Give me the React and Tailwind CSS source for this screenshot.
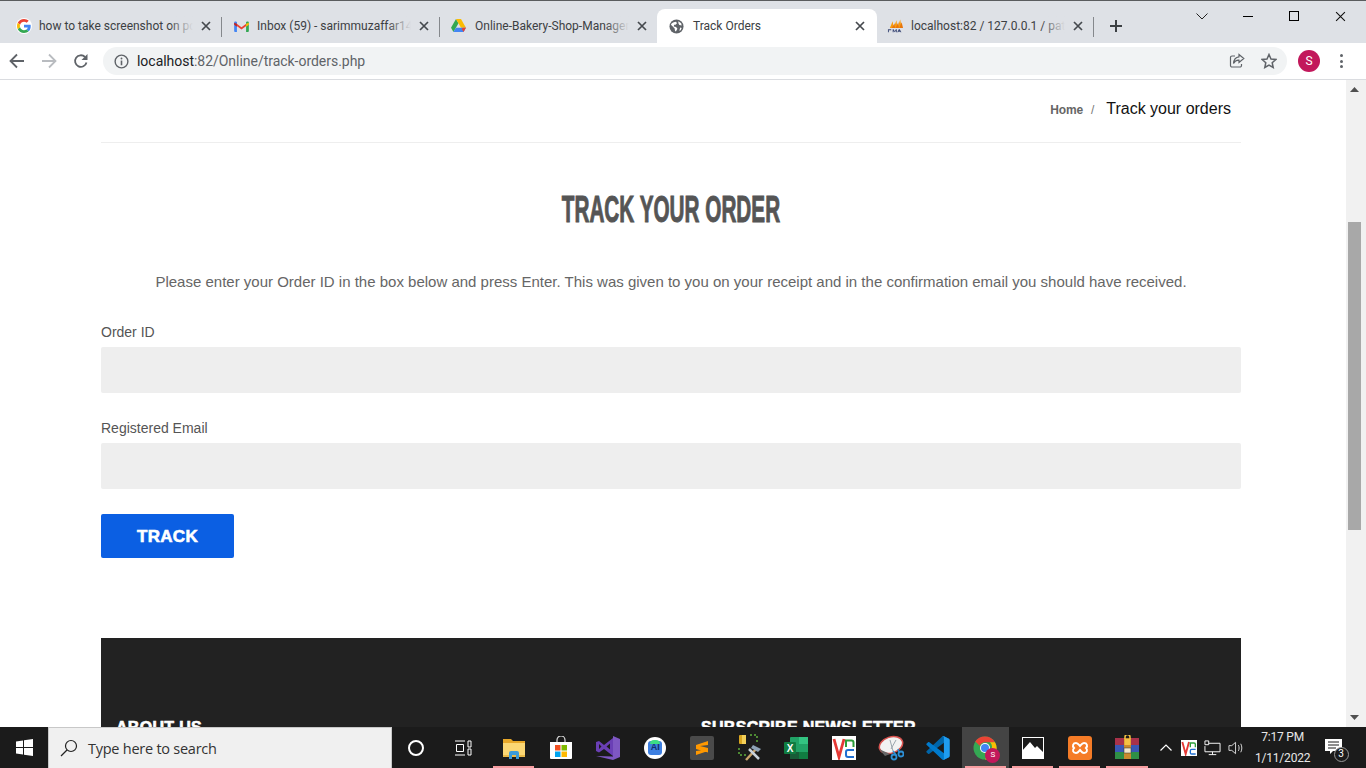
import React from "react";

const ui = "font-['Roboto','Noto_Sans',sans-serif]";

const GoogleIcon = () => (
  <span className="w-4 h-4 rounded-full bg-white flex items-center justify-center">
    <svg width="14" height="14" viewBox="0 0 48 48">
      <path fill="#EA4335" d="M24 9.5c3.5 0 6.7 1.2 9.2 3.6l6.9-6.9C35.9 2.4 30.5 0 24 0 14.6 0 6.5 5.4 2.6 13.2l8 6.2C12.5 13.7 17.800 9.500 24 9.500z" />
      <path fill="#4285F4" d="M47 24.500c0-1.600-.1-3.100-.4-4.500H24v9h12.900c-.6 3-2.200 5.500-4.700 7.200l7.700 6c4.500-4.200 7.100-10.300 7.100-17.700z" />
      <path fill="#FBBC05" d="M10.600 28.600c-.5-1.400-.8-3-.8-4.600s.3-3.200.8-4.600l-8-6.200C.9 16.500 0 20.100 0 24s.9 7.500 2.600 10.800l8-6.200z" />
      <path fill="#34A853" d="M24 48c6.500 0 11.900-2.100 15.900-5.800l-7.700-6c-2.100 1.400-4.900 2.300-8.200 2.300-6.200 0-11.500-4.200-13.400-9.900l-8 6.200C6.500 42.600 14.600 48 24 48z" />
    </svg>
  </span>
);

const GmailIcon = () => (
  <svg width="15" height="11" viewBox="0 0 16 12">
    <path fill="#EA4335" d="M1 1.500 8 6.800l7-5.300V4L8 9.200 1 4z" />
    <path fill="#4285F4" d="M0 2c0-1.500 1.300-2 2.500-1.200L3 1.200V12H1a1 1 0 0 1-1-1z" />
    <path fill="#34A853" d="M16 2c0-1.500-1.300-2-2.500-1.200l-.5.4V12h2a1 1 0 0 0 1-1z" />
    <path fill="#C5221F" d="M0 2v2l3 2.200V3z" />
    <path fill="#FBBC04" d="M16 2v2l-3 2.200V3z" />
  </svg>
);

const DriveIcon = () => (
  <svg width="15" height="14" viewBox="0 0 16 15" className="-ml-px">
    <path fill="#34A853" d="M5.300 0 0 9.300l2.600 4.500L8 4.600z" />
    <path fill="#FBBC04" d="M5.300 0h5.400L16 9.300h-5.300z" />
    <path fill="#4285F4" d="M5.200 9.300 2.600 13.800h10.800L16 9.300z" />
    <path fill="#EA4335" d="M16 9.300 13.400 13.800 11.500 10.800 12.500 9.300z" />
  </svg>
);

const GlobeIcon = () => (
  <svg width="15" height="15" viewBox="0 0 16 16" className="-ml-px">
    <circle cx="8" cy="8" r="7.500" fill="#5f6368" />
    <path fill="#fff" d="M3 4.500 5 3.500 7.500 3 8.500 4.500 7 6 5.500 6 5 8 7.500 8.500 9 10.500 7.500 13 6.500 13 6 10 3.500 7.500 2 6zM10 2.500 13 4.500 13.500 7 11 6.500 10 4.500zM12 9 13.500 9.500 12.500 12 11 12.500z" />
  </svg>
);

const PmaIcon = () => (
  <svg width="17" height="16" viewBox="0 0 18 16">
    <path fill="#F89C0E" d="M3 10 6 3l1 7zM7 10l3-8 1 8zM11 10l3-9 1.500 9z" />
    <path fill="#E8760B" d="M5 10 8 5l.5 5zM9 10l3-6 .5 6zM13 10l2.500-6 1.500 6z" />
    <path fill="#3d4a78" d="M1 11.500h3.500v.9H2v2.300H1zM6 11.500h1l1.200 2 1.200-2h1v3.200h-1v-1.700l-1.200 1.700L7 13v1.700H6zM12.500 11.500h1l1.800 3.200h-1l-.3-.6h-1.800l-.4.6h-1z" />
  </svg>
);

const CloseX = ({ size = 10, w = 1.700, color = "#45494e" }) => (
  <svg width={size} height={size} viewBox="0 0 10 10">
    <path d="M1 1l8 8M9 1l-8 8" stroke={color} strokeWidth={w} fill="none" />
  </svg>
);

const tabs = [
  { icon: <GoogleIcon />, text: "how to take screenshot on pc - Google Search", sep: true },
  { icon: <GmailIcon />, text: "Inbox (59) - sarimmuzaffar14@gmail.com", sep: true },
  { icon: <DriveIcon />, text: "Online-Bakery-Shop-Management", sep: false },
];

function Tab({ icon, text, sep }) {
  return (
    <div className="relative w-[218px] h-[34px] flex items-center pl-[8px] shrink-0">
      <span className="w-[23px] shrink-0 flex items-center">{icon}</span>
      <span className="relative w-[154px] overflow-hidden whitespace-nowrap text-[12px] text-[#3c4043] leading-none py-1">
        {text}
        <span className="absolute right-0 top-0 bottom-0 w-[24px] bg-gradient-to-r from-transparent to-[#dee1e6]" />
      </span>
      <span className="ml-[8px] shrink-0 flex"><CloseX /></span>
      {sep && <span className="absolute right-[4px] top-[8px] w-px h-[20px] bg-[#85888c]" />}
    </div>
  );
}

function TabBar() {
  return (
    <div className={`h-[43px] bg-[#dee1e6] border-t border-[#5a5c5e] flex shrink-0 ${ui}`}>
      <div className="flex items-end pl-[8px] w-[1190px] shrink-0">
        {tabs.map((t) => <Tab key={t.text} {...t} />)}
        <div className="relative -ml-[5px] w-[220px] h-[34px] bg-white rounded-t-[8px] flex items-center pl-[13px] shrink-0">
          <span className="w-[23px] flex"><GlobeIcon /></span>
          <span className="w-[162px] text-[12px] text-[#3c4043] whitespace-nowrap leading-none">Track Orders</span>
          <CloseX />
        </div>
        <div className="relative w-[218px] h-[34px] flex items-center pl-[10px] shrink-0">
          <span className="w-[24px] shrink-0 flex"><PmaIcon /></span>
          <span className="relative w-[154px] overflow-hidden whitespace-nowrap text-[12px] text-[#3c4043] leading-none py-1">
            localhost:82 / 127.0.0.1 / patches / phpMyAdmin
            <span className="absolute right-0 top-0 bottom-0 w-[24px] bg-gradient-to-r from-transparent to-[#dee1e6]" />
          </span>
          <span className="ml-[8px] shrink-0 flex"><CloseX /></span>
          <span className="absolute right-[1px] top-[8px] w-px h-[20px] bg-[#85888c]" />
        </div>
        <div className="h-[34px] flex items-center ml-[14px]">
          <svg width="14" height="14" viewBox="0 0 14 14"><path d="M7 1v12M1 7h12" stroke="#3c4043" strokeWidth="2" /></svg>
        </div>
      </div>
      <div className="flex-1 relative flex h-[30px] pl-[1px]">
        <div className="w-[22px] flex items-center justify-center">
          <svg width="12" height="7" viewBox="0 0 12 7"><path d="M.5.5 6 6l5.500-5.500" stroke="#222" fill="none" /></svg>
        </div>
        <div className="w-[46px] ml-[12px] flex items-center justify-center">
          <span className="w-[10px] h-px bg-black" />
        </div>
        <div className="w-[46px] flex items-center justify-center">
          <span className="w-[10px] h-[10px] border border-black" />
        </div>
        <div className="w-[46px] flex items-center justify-center">
          <CloseX size={11} w={1} color="#111" />
        </div>
      </div>
    </div>
  );
}

function Toolbar() {
  return (
    <div className="h-[37px] bg-white border-b border-[#dadce0] flex items-center shrink-0">
      <div className="w-[103px] flex items-center pl-[9px] gap-[16px] shrink-0">
        <svg width="16" height="16" viewBox="0 0 16 16"><path d="M15 8H2M8 1.500 1.500 8 8 14.500" stroke="#5f6368" strokeWidth="1.800" fill="none" /></svg>
        <svg width="16" height="16" viewBox="0 0 16 16"><path d="M1 8h13M8 1.500 14.500 8 8 14.500" stroke="#b9bcc0" strokeWidth="1.800" fill="none" /></svg>
        <svg width="16" height="16" viewBox="0 0 16 16"><path d="M13.500 9.500A5.800 5.800 0 1 1 12 4" stroke="#5f6368" strokeWidth="1.800" fill="none" /><path d="M14.500 1v6h-6z" fill="#5f6368" /></svg>
      </div>
      <div className="w-[1184px] h-[28px] bg-[#f1f3f4] rounded-full flex items-center pl-[11px] pr-[10px] shrink-0">
        <svg width="15" height="15" viewBox="0 0 16 16"><circle cx="8" cy="8" r="6.800" stroke="#5f6368" strokeWidth="1.500" fill="none" /><path d="M8 7v5" stroke="#5f6368" strokeWidth="1.700" /><circle cx="8" cy="4.800" r="1" fill="#5f6368" /></svg>
        <span className="ml-[8px] text-[14px] leading-none whitespace-nowrap font-['Roboto',sans-serif] text-[#5f6368] tracking-[-0.03px]">
          <span className="text-[#202124]">localhost</span>:82/Online/track-orders.php
        </span>
        <span className="ml-auto mr-[16px] flex">
          <svg width="16" height="16" viewBox="0 0 16 16"><path d="M6 3H3a1.500 1.500 0 0 0-1.500 1.500v8A1.500 1.500 0 0 0 3 14h8a1.500 1.500 0 0 0 1.500-1.500V11" stroke="#5f6368" strokeWidth="1.200" fill="none" /><path d="M10 1.500 14.800 5.500 10 9.500V7.200C7.500 7 5.800 8 4.500 10.500 4.800 7 6.500 4.200 10 3.800z" stroke="#5f6368" strokeWidth="1.200" fill="none" /></svg>
        </span>
        <svg width="16" height="16" viewBox="0 0 16 16"><path d="M8 1.500 10 6l4.800.5-3.600 3.200 1 4.800L8 12l-4.200 2.500 1-4.800L1.200 6.500 6 6z" stroke="#5f6368" strokeWidth="1.500" fill="none" /></svg>
      </div>
      <span className="ml-[11px] w-[22px] h-[22px] rounded-full bg-[#c2185b] text-white text-[12px] flex items-center justify-center font-['Roboto',sans-serif] shrink-0">S</span>
      <span className="ml-[20px] flex flex-col gap-[2.500px]">
        <span className="w-[3px] h-[3px] rounded-full bg-[#5f6368]" />
        <span className="w-[3px] h-[3px] rounded-full bg-[#5f6368]" />
        <span className="w-[3px] h-[3px] rounded-full bg-[#5f6368]" />
      </span>
    </div>
  );
}

function Field({ label, top }) {
  return (
    <div className={top}>
      <label className="block text-[14px] leading-[20px] text-[#555]">{label}</label>
      <div className="mt-[5px] h-[46px] bg-[#eeeeee] rounded-[2px]" />
    </div>
  );
}

function Page() {
  return (
    <div className="w-[1346px] overflow-hidden bg-white font-['Liberation_Sans',Arial,sans-serif] shrink-0">
      <div className="ml-[101px] w-[1140px]">
        <div className="h-[63px] border-b border-[#eeeeee] flex justify-end items-start pt-[19px] pr-[10px]">
          <span className="text-[12px] font-bold text-[#666] mt-[4px] leading-[14px] tracking-[-0.2px]">Home</span>
          <span className="text-[12px] text-[#777] mt-[4px] ml-[8px] mr-[12px] leading-[14px]">/</span>
          <span className="text-[16px] text-[#111] leading-[20px]">Track your orders</span>
        </div>
        <div className="mt-[47px] flex justify-center">
          <h1 className="text-center text-[37px] leading-[40px] font-bold text-[#555] whitespace-nowrap scale-x-[0.56] [-webkit-text-stroke:1px_#555]">TRACK YOUR ORDER</h1>
        </div>
        <p className="mt-[42px] text-center text-[15px] leading-[20px] text-[#666] whitespace-nowrap">
          Please enter your Order ID in the box below and press Enter. This was given to you on your receipt and in the confirmation email you should have received.
        </p>
        <Field label="Order ID" top="mt-[30px]" />
        <Field label="Registered Email" top="mt-[25px]" />
        <button className="mt-[25px] w-[133px] h-[44px] pt-[1px] bg-[#0b5fe3] rounded-[2px] text-white text-[17px] font-bold [-webkit-text-stroke:0.6px_white] tracking-[0.3px] flex items-center justify-center">TRACK</button>
        <div className="mt-[80px] h-[200px] bg-[#222222] flex pt-[80px] pl-[15px] text-white text-[16px] font-bold [-webkit-text-stroke:0.6px_white] leading-[20px] tracking-[0.3px]">
          <div className="w-[585px]">ABOUT US</div>
          <div>SUBSCRIBE NEWSLETTER</div>
        </div>
      </div>
    </div>
  );
}

function Scrollbar() {
  return (
    <div className="flex-1 bg-[#f1f1f1] flex flex-col items-start pl-[2px]">
      <svg className="mt-[7px] ml-[2px] shrink-0" width="9" height="5" viewBox="0 0 9 5"><path d="M4.500 0 9 5H0z" fill="#505050" /></svg>
      <div className="mt-[130px] w-[13px] h-[308px] bg-[#a8a8a8] shrink-0" />
      <svg className="mt-auto mb-[7px] ml-[2px] shrink-0" width="9" height="5" viewBox="0 0 9 5"><path d="M4.500 5 9 0H0z" fill="#505050" /></svg>
    </div>
  );
}

const Store = () => (
  <svg width="24" height="24" viewBox="0 0 24 24">
    <path d="M8 7V4a4 4 0 0 1 8 0v3" stroke="#ddd" fill="none" strokeWidth="1.200" />
    <path fill="#fff" d="M1 6h22v16a1 1 0 0 1-1 1H2a1 1 0 0 1-1-1z" />
    <rect x="6" y="9" width="5.500" height="5.500" fill="#f25022" />
    <rect x="12.500" y="9" width="5.500" height="5.500" fill="#7fba00" />
    <rect x="6" y="15.500" width="5.500" height="5.500" fill="#00a4ef" />
    <rect x="12.500" y="15.500" width="5.500" height="5.500" fill="#ffb900" />
  </svg>
);

const Explorer = () => (
  <svg width="24" height="24" viewBox="0 0 24 24">
    <path fill="#e8a829" d="M1 3h8l2 2h12v3H1z" />
    <path fill="#fbd774" d="M1 7h22v14H1z" />
    <path fill="#e9b949" d="M1 19h22v2H1z" />
    <path fill="#3d9bd9" d="M7 23v-6a2 2 0 0 1 2-2h6a2 2 0 0 1 2 2v6h-3v-4h-4v4z" />
  </svg>
);

const VS = () => (
  <svg width="24" height="26" viewBox="0 0 24 26">
    <path fill="#7e57c2" d="M17 1 24 4v18l-7 3-17-4 17 .5z" />
    <path fill="#6a3fb5" fillRule="evenodd" d="M0 7l3-1 5 4L17 3v18l-9-7-5 3.500L0 16zM3 9v5l2.500-2.500zM10.500 11.500 14 14.500v-6z" />
  </svg>
);

const Studio = () => (
  <span className="w-[22px] h-[22px] rounded-full bg-white flex items-center justify-center relative">
    <span className="w-[14px] h-[14px] rounded-[3px] bg-[#3d7fe0] text-[#12306b] text-[9px] font-bold flex items-center justify-center font-['Liberation_Sans',sans-serif]">AI</span>
    <span className="absolute top-[3px] w-[10px] h-[4px] rounded-t-full bg-[#3ddc84]" />
  </span>
);

const Sublime = () => (
  <span className="w-[24px] h-[24px] bg-[#4a4a4a] rounded-[2px] flex items-center justify-center">
    <svg width="14" height="16" viewBox="0 0 14 16"><path fill="#ff9800" d="M13 1 1 5v4l12 3.500V8L5 6l8-1zM1 11v4l12-4-4-1.200z" /></svg>
  </span>
);

const Tools = () => (
  <svg width="26" height="30" viewBox="0 0 26 30">
    <rect x="2" y="2" width="7" height="9" rx="1" fill="#d9a520" />
    <rect x="5" y="2" width="4" height="9" fill="#f4cf58" />
    <path d="M13 2h7v7M2 15v7h7" stroke="#5fae3d" strokeDasharray="2 2" strokeWidth="1.500" fill="none" />
    <path d="M9 27 20 15" stroke="#c8a26a" strokeWidth="2.500" />
    <path d="M12 16l10 10" stroke="#c9d2dc" strokeWidth="2.500" />
    <path d="M16 12l8 4-3 3-7-4z" fill="#8da2b6" />
  </svg>
);

const Excel = () => (
  <svg width="25" height="24" viewBox="0 0 25 24">
    <rect x="6" y="1" width="18" height="22" rx="1" fill="#21a366" />
    <rect x="15" y="1" width="9" height="7" fill="#33c481" />
    <rect x="15" y="16" width="9" height="7" fill="#107c41" />
    <rect x="6" y="16" width="9" height="7" fill="#185c37" />
    <rect x="0" y="6" width="12" height="12" rx="1" fill="#107c41" />
    <text x="6" y="15.500" textAnchor="middle" fontSize="10" fontWeight="700" fill="#fff" fontFamily="Liberation Sans">X</text>
  </svg>
);

const Vnc = ({ size = 24 }) => (
  <svg width={size} height={size} viewBox="0 0 24 24">
    <rect width="24" height="24" fill="#fff" />
    <path d="M2 3l5 18 5-18" stroke="#e53935" strokeWidth="2.800" fill="none" />
    <path d="M14 11V4.500h5.500a2 2 0 0 1 2 2V11" stroke="#2e9e3a" strokeWidth="2" fill="none" />
    <path d="M22 14h-6a2 2 0 0 0-2 2v3a2 2 0 0 0 2 2h6" stroke="#1f6fd1" strokeWidth="2" fill="none" />
  </svg>
);

const Snip = () => (
  <svg width="26" height="26" viewBox="0 0 26 26">
    <ellipse cx="13" cy="10" rx="12" ry="8" transform="rotate(-18 13 10)" fill="#f2f2f2" stroke="#d9534f" strokeWidth="1.500" />
    <path d="M1 14l6 7 5-2" fill="#666" />
    <path d="M12 5l3 11M18 5 13 14" stroke="#9aa5ad" />
    <circle cx="16" cy="22" r="2.500" stroke="#2d8fd5" strokeWidth="1.800" fill="none" />
    <circle cx="23" cy="19" r="2.500" stroke="#2d8fd5" strokeWidth="1.800" fill="none" />
    <path d="M15 16l3 4M20 14l1 3" stroke="#2d8fd5" strokeWidth="1.500" />
  </svg>
);

const VSCode = () => (
  <svg width="24" height="24" viewBox="0 0 100 100">
    <path fill="#0065a9" d="M96 11 75 1c-2.500-1-5.500-.5-7.500 1.500L3 62c-2 1.800-2 4.800 0 6.600l5.500 5c1.500 1.400 3.800 1.500 5.400.3L97 11z" />
    <path fill="#007acc" d="M96 89 75 99c-2.500 1-5.500.5-7.500-1.500L3 38c-2-1.800-2-4.800 0-6.600l5.500-5c1.500-1.400 3.800-1.500 5.400-.3L97 89z" />
    <path fill="#1f9cf0" d="M75 99c-2.500 1.200-5.500.7-7.500-1.300 2.500 2.500 7 .8 7-2.800V5c0-3.600-4.500-5.300-7-2.800C69.500.2 72.500-.3 75 1l20 10c2.500 1 4 3.300 4 6v66c0 2.700-1.500 5-4 6z" />
  </svg>
);

const Chrome = () => (
  <span className="relative w-[24px] h-[24px] block">
    <svg width="24" height="24" viewBox="0 0 48 48">
      <circle cx="24" cy="24" r="23" fill="#34a853" />
      <path fill="#ea4335" d="M24 1a23 23 0 0 1 20 11.500H24a11.500 11.500 0 0 0-10.500 7L4.500 11A23 23 0 0 1 24 1z" />
      <path fill="#fbbc04" d="M44 12.500A23 23 0 0 1 24 47l10-17a11.500 11.500 0 0 0 0-17.500z" />
      <circle cx="24" cy="24" r="10" fill="#fff" />
      <circle cx="24" cy="24" r="8" fill="#4285f4" />
    </svg>
    <span className="absolute -right-[3px] -bottom-[3px] w-[15px] h-[15px] rounded-full bg-[#c2185b] text-white text-[8px] leading-none flex items-center justify-center font-['Roboto',sans-serif]">S</span>
  </span>
);

const Photos = () => (
  <svg width="22" height="22" viewBox="0 0 22 22">
    <rect x=".5" y=".5" width="21" height="21" fill="#1b1b1b" stroke="#fff" />
    <path fill="#fff" d="M0 22V14L8 5l5 6 2-2 7 7v6z" />
  </svg>
);

const Xampp = () => (
  <span className="w-[24px] h-[24px] bg-[#f57c27] rounded-[3px] flex items-center justify-center">
    <svg width="18" height="16" viewBox="0 0 18 16">
      <path d="M5 3c-3 0-4 3-2 5-2 2-1 5 2 5 2 0 3-2 4-3 1 1 2 3 4 3 3 0 4-3 2-5 2-2 1-5-2-5-2 0-3 2-4 3-1-1-2-3-4-3z" stroke="#fff" strokeWidth="2" fill="none" />
    </svg>
  </span>
);

const WinRar = () => (
  <svg width="24" height="26" viewBox="0 0 24 26">
    <rect x="0" y="3" width="24" height="7" fill="#a8324a" />
    <rect x="0" y="10" width="24" height="7" fill="#3a57b5" />
    <rect x="0" y="17" width="24" height="7" fill="#2f8f46" />
    <rect x="9" y="3" width="7" height="21" fill="#c98a2e" />
    <rect x="9" y="13" width="7" height="5" fill="#f1e6c8" stroke="#333" strokeWidth=".5" />
    <path d="M10 4V2a2.500 2.500 0 0 1 5 0v2" stroke="#f5c242" fill="none" strokeWidth="1.500" />
    <rect x="9.500" y="4" width="6" height="6" fill="#f5c242" />
  </svg>
);

const apps = [
  { el: <Explorer />, on: true },
  { el: <Store /> },
  { el: <VS /> },
  { el: <Studio /> },
  { el: <Sublime /> },
  { el: <Tools /> },
  { el: <Excel /> },
  { el: <Vnc /> },
  { el: <Snip /> },
  { el: <VSCode /> },
  { el: <Chrome />, on: true, active: true },
  { el: <Photos />, on: true },
  { el: <Xampp />, on: true },
  { el: <WinRar />, on: true },
];

function Taskbar() {
  return (
    <div className={`h-[41px] bg-[#1b1b1b] flex shrink-0 items-stretch text-white ${ui}`}>
      <div className="w-[48px] flex items-center justify-center shrink-0">
        <svg width="17" height="17" viewBox="0 0 17 17" fill="#fff">
          <path d="M0 2.400 7 1.400v6.600H0zM8 1.200 17 0v8H8zM0 9h7v6.600L0 14.600zM8 9h9v8l-9-1.200z" />
        </svg>
      </div>
      <div className="w-[344px] bg-[#f0f0f0] border border-[#c8c8c8] border-b-0 flex items-center pl-[11px] shrink-0">
        <svg width="18" height="18" viewBox="0 0 18 18"><circle cx="11" cy="7" r="5.500" stroke="#222" strokeWidth="1.200" fill="none" /><path d="M7 11l-6 6" stroke="#222" strokeWidth="1.300" /></svg>
        <span className="ml-[10px] pt-[1px] text-[14.500px] text-[#333] font-['Open_Sans',sans-serif] tracking-[-0.25px] whitespace-nowrap">Type here to search</span>
      </div>
      <div className="w-[47px] flex items-center justify-center shrink-0">
        <span className="w-[16px] h-[16px] rounded-full border-[2.500px] border-white" />
      </div>
      <div className="w-[47px] flex items-center justify-center shrink-0">
        <svg width="18" height="16" viewBox="0 0 18 16"><path d="M1 1h10M1 15h10M2.500 4.500h7v7h-7z" stroke="#fff" fill="none" /><path d="M14 1v6M14 9v6M14 1h3v6h-3M14 9h3v6h-3" stroke="#fff" fill="none" /></svg>
      </div>
      <div className="w-[4px] shrink-0" />
      {apps.map((a, i) => (
        <div key={i} className={`w-[47.200px] shrink-0 flex items-center justify-center relative ${a.active ? "bg-[#444444]" : ""}`}>
          {a.el}
          {a.on && <span className="absolute left-[3px] right-[3px] bottom-0 h-[2px] bg-[#f79da0]" />}
        </div>
      ))}
      <div className="flex-1 flex items-center relative">
        <svg className="ml-[9px]" width="12" height="7" viewBox="0 0 12 7"><path d="M.5 6.500 6 1l5.500 5.500" stroke="#fff" strokeWidth="1.200" fill="none" /></svg>
        <span className="ml-[9px] flex"><Vnc size={16} /></span>
        <svg className="ml-[7px]" width="17" height="16" viewBox="0 0 18 16"><path d="M5 .5h-4v4h4zM5 3h12v9H1V6M9 12v3M5 15h8" stroke="#fff" fill="none" /></svg>
        <svg className="ml-[7px]" width="17" height="16" viewBox="0 0 18 16"><path d="M1 5.500h3L8 2v12L4 10.500H1zM11 5c1 2 1 4 0 6M13.500 3.500c1.500 3 1.500 6 0 9" stroke="#ddd" fill="none" /></svg>
        <div className="w-[60px] ml-[8px] text-center text-[12px] leading-[21px] text-[#e8e8e8] whitespace-nowrap tracking-[-0.2px]">
          <div>7:17 PM</div>
          <div>1/11/2022</div>
        </div>
        <div className="relative ml-[12px] w-[18px] h-[18px]">
          <svg width="18" height="16" viewBox="0 0 18 16"><path fill="#fff" d="M0 0h17v12H8l-3 3v-3H0z" /><path d="M3 3h11M3 6h11M3 9h8" stroke="#1b1b1b" /></svg>
          <span className="absolute -right-[6px] -bottom-[5px] w-[15px] h-[15px] rounded-full bg-[#1b1b1b] border border-[#999] text-[10px] flex items-center justify-center leading-none">3</span>
        </div>
      </div>
    </div>
  );
}

export default function App() {
  return (
    <div className="w-[1366px] h-[768px] flex flex-col overflow-hidden bg-white">
      <TabBar />
      <Toolbar />
      <div className="flex-1 min-h-0 flex">
        <Page />
        <Scrollbar />
      </div>
      <Taskbar />
    </div>
  );
}
